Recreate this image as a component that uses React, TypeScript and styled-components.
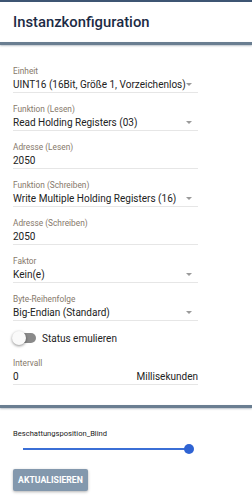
import React from 'react';
import styled, { createGlobalStyle } from 'styled-components';

const GlobalStyle = createGlobalStyle`
  html, body {
    margin: 0;
    padding: 0;
    background: #ffffff;
    font-family: Roboto, "Noto Sans", "Liberation Sans", sans-serif;
  }
`;

const Page = styled.div`
  width: 252px;
  min-height: 500px;
  border-top: 2px solid #3d5573;
  box-sizing: border-box;
`;

const Header = styled.div`
  height: 40px;
  padding-left: 13px;
  display: flex;
  align-items: center;
  font-size: 14.8px;
  font-weight: 500;
  color: #1c2b45;
`;

const Divider = styled.div`
  height: 3px;
  background: #6a7e91;
  box-shadow: 0 1px 2px rgba(60, 80, 100, 0.35);
`;

const Form = styled.div`
  padding: 21px 0 0 13px;
  width: 185px;
  display: flex;
  flex-direction: column;
`;

const Field = styled.div`
  display: flex;
  flex-direction: column;
  border-bottom: 1px solid #e6e6e6;
  margin-bottom: 11px;
`;

const Label = styled.div`
  font-size: 8.3px;
  line-height: 10px;
  height: 10px;
  color: #86786a;
`;

const ValueRow = styled.div`
  height: 16px;
  display: flex;
  align-items: center;
  justify-content: space-between;
  font-size: 10px;
  color: #222222;
  white-space: nowrap;
`;

const Arrow = styled.span`
  flex: none;
  width: 0;
  height: 0;
  margin-right: 6px;
  border-left: 3px solid transparent;
  border-right: 3px solid transparent;
  border-top: 3px solid #9a9a9a;
`;

const Unit = styled.span`
  color: #222222;
`;

const SwitchRow = styled.div`
  height: 20px;
  display: flex;
  align-items: center;
  gap: 6px;
  margin: -4px 0 10px;
  font-size: 10px;
  color: #222222;
`;

const SwitchTrack = styled.div`
  position: relative;
  width: 22px;
  height: 10px;
  margin-left: 1px;
  border-radius: 5px;
  background: #8a8a8a;
`;

const SwitchKnob = styled.div`
  position: absolute;
  left: -2px;
  top: -2px;
  width: 14px;
  height: 14px;
  border-radius: 50%;
  background: #fafafa;
  box-shadow: 0 1px 3px rgba(0, 0, 0, 0.45);
`;

const BottomDivider = styled(Divider)`
  margin-top: 9px;
`;

const Control = styled.div`
  padding: 20px 0 0 13px;
`;

const ControlLabel = styled.div`
  font-size: 7.6px;
  line-height: 11px;
  color: #222222;
`;

const SliderBox = styled.div`
  position: relative;
  width: 166px;
  height: 10px;
  margin: 5px 0 0 10px;
  display: flex;
  align-items: center;
`;

const SliderLine = styled.div`
  width: 100%;
  height: 2px;
  background: #3b6fd6;
`;

const SliderThumb = styled.div`
  position: absolute;
  right: -5px;
  top: 0;
  width: 10px;
  height: 10px;
  border-radius: 50%;
  background: #2f63d3;
`;

const Button = styled.button`
  display: block;
  margin: 15px 0 0 13px;
  height: 22px;
  width: 75px;
  padding: 0;
  border: none;
  border-radius: 2px;
  background: #8398ad;
  color: #ffffff;
  font-family: Roboto, "Liberation Sans", sans-serif;
  font-size: 8.7px;
  font-weight: 700;
  box-shadow: 0 1px 3px rgba(0, 0, 0, 0.3);
`;

type FieldInfo = {
  label: string,
  value: string,
  select?: boolean,
  unit?: string
};

const fields: FieldInfo[] = [
  { label: 'Einheit', value: 'UINT16 (16Bit, Größe 1, Vorzeichenlos)', select: true },
  { label: 'Funktion (Lesen)', value: 'Read Holding Registers (03)', select: true },
  { label: 'Adresse (Lesen)', value: '2050' },
  { label: 'Funktion (Schreiben)', value: 'Write Multiple Holding Registers (16)', select: true },
  { label: 'Adresse (Schreiben)', value: '2050' },
  { label: 'Faktor', value: 'Kein(e)', select: true },
  { label: 'Byte-Reihenfolge', value: 'Big-Endian (Standard)', select: true },
];

const FormField = ({ label, value, select, unit }: FieldInfo) => (
  <Field>
    <Label>{label}</Label>
    <ValueRow>
      <span>{value}</span>
      {select && <Arrow />}
      {unit && <Unit>{unit}</Unit>}
    </ValueRow>
  </Field>
);

const App = () => (
  <>
    <GlobalStyle />
    <Page>
      <Header>Instanzkonfiguration</Header>
      <Divider />
      <Form>
        {fields.map((f) => <FormField key={f.label} {...f} />)}
        <SwitchRow>
          <SwitchTrack>
            <SwitchKnob />
          </SwitchTrack>
          Status emulieren
        </SwitchRow>
        <FormField label="Intervall" value="0" unit="Millisekunden" />
      </Form>
      <BottomDivider />
      <Control>
        <ControlLabel>Beschattungsposition_Blind</ControlLabel>
        <SliderBox>
          <SliderLine />
          <SliderThumb />
        </SliderBox>
      </Control>
      <Button>AKTUALISIEREN</Button>
    </Page>
  </>
);

export default App;
